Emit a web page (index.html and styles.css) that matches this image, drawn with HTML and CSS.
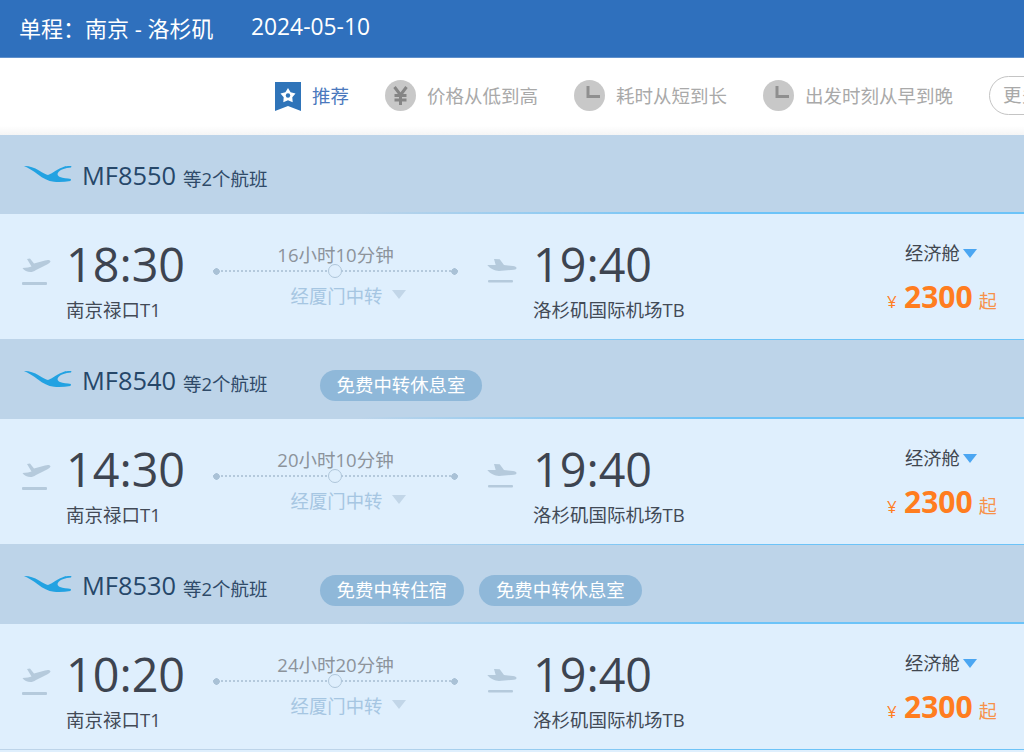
FILE: index.html
```html
<!DOCTYPE html>
<html lang="zh">
<head>
<meta charset="utf-8">
<title>航班列表</title>
<link rel="stylesheet" href="styles.css">
</head>
<body>
<svg class="defs" width="0" height="0" aria-hidden="true">
  <defs>
    <symbol id="logo" viewBox="0 0 48 18">
      <path d="M0 1C5 .8 10 2.500 15 5.500C19 7.800 22 9.800 24 10C29 8 34 3.500 40 1.700C42 1.200 45 1 47.500 1.200L47 2.500C41 3 37 4.500 35 6.500C33 8.500 33 10.500 36 12C39 13 43 13.500 47 14L46.500 16C41 17 35 17.300 30 16.800C24 16 19 13.500 14 9.500C9 5.500 4 3 0 1Z"/>
    </symbol>
    <symbol id="dep" viewBox="0 0 30 30">
      <path class="plane" d="M6 1L9 .5L13 5.500L24 2.500C27 1.500 29.500 2 29.500 3.500C29 5 27 6 24 7.500L15 12C13 13.500 11 14 9.500 14C6.500 14 3 12.500 1.500 10L7 9.500L10.500 8.500Z"/>
      <rect class="plane" x="1" y="24" width="25" height="3" rx="1"/>
    </symbol>
    <symbol id="arr" viewBox="0 0 30 30">
      <path class="plane" d="M7 1L12.700 1.300L17 7L26 8C28 8.300 29.500 9 29.500 10C29.500 11 28.500 11.500 27 11.700L12 13C8 12.800 3 10.500 .3 7L8.700 7Z"/>
      <rect class="plane" x="1" y="22" width="25" height="2.500" rx="1"/>
    </symbol>
    <symbol id="clock" viewBox="0 0 31 31">
      <circle cx="15.500" cy="15.500" r="15.500" fill="#c8c8c8"/>
      <path d="M14 6V16.500H26" fill="none" stroke="#8f8f8f" stroke-width="3"/>
    </symbol>
  </defs>
</svg>

<header class="topbar">
  <span class="route">单程：南京 - 洛杉矶</span>
  <span class="date">2024-05-10</span>
</header>

<nav class="sortbar">
  <div class="sort active">
    <svg class="badge" width="26" height="29" viewBox="0 0 26 29"><path d="M0 0H26V29L13 24L0 29Z" fill="#2f74b9"/><path d="M13 6L15.600 10.200L20.500 11.400L17.300 15.200L17.700 20.200L13 18.300L8.300 20.200L8.700 15.200L5.500 11.400L10.400 10.200Z" fill="#fff"/><circle cx="13" cy="13.500" r="2.200" fill="#2f74b9"/></svg>
    <span>推荐</span>
  </div>
  <div class="sort">
    <svg class="round" width="31" height="31" viewBox="0 0 31 31"><circle cx="15.500" cy="15.500" r="15.500" fill="#c8c8c8"/><path d="M9.500 7L15.500 15L21.500 7M15.500 15V25M9.500 15.500H21.500M9.500 20H21.500" fill="none" stroke="#858585" stroke-width="3"/></svg>
    <span>价格从低到高</span>
  </div>
  <div class="sort">
    <svg class="round" width="31" height="31"><use href="#clock"/></svg>
    <span>耗时从短到长</span>
  </div>
  <div class="sort">
    <svg class="round" width="31" height="31"><use href="#clock"/></svg>
    <span>出发时刻从早到晚</span>
  </div>
  <div class="more">更多筛选</div>
</nav>

<main class="list">
  <section class="group">
    <div class="ghead">
      <svg class="logo" width="48" height="18"><use href="#logo"/></svg>
      <span class="fno">MF8550</span>
      <span class="etc">等2个航班</span>
    </div>
    <div class="row">
      <svg class="icon" width="30" height="30"><use href="#dep"/></svg>
      <div class="point dep"><div class="time">18:30</div><div class="place">南京禄口T1</div></div>
      <div class="mid">
        <div class="dur">16小时10分钟</div>
        <div class="line"><i class="node"></i></div>
        <div class="via">经厦门中转<i class="tri pale"></i></div>
      </div>
      <svg class="icon" width="30" height="30"><use href="#arr"/></svg>
      <div class="point arr"><div class="time">19:40</div><div class="place">洛杉矶国际机场TB</div></div>
      <div class="fare">
        <div class="cabin">经济舱<i class="tri blue"></i></div>
        <div class="price"><span class="yen">¥</span><b>2300</b><span class="from">起</span></div>
      </div>
    </div>
  </section>

  <section class="group">
    <div class="ghead">
      <svg class="logo" width="48" height="18"><use href="#logo"/></svg>
      <span class="fno">MF8540</span>
      <span class="etc">等2个航班</span>
      <span class="tags"><span class="tag">免费中转休息室</span></span>
    </div>
    <div class="row">
      <svg class="icon" width="30" height="30"><use href="#dep"/></svg>
      <div class="point dep"><div class="time">14:30</div><div class="place">南京禄口T1</div></div>
      <div class="mid">
        <div class="dur">20小时10分钟</div>
        <div class="line"><i class="node"></i></div>
        <div class="via">经厦门中转<i class="tri pale"></i></div>
      </div>
      <svg class="icon" width="30" height="30"><use href="#arr"/></svg>
      <div class="point arr"><div class="time">19:40</div><div class="place">洛杉矶国际机场TB</div></div>
      <div class="fare">
        <div class="cabin">经济舱<i class="tri blue"></i></div>
        <div class="price"><span class="yen">¥</span><b>2300</b><span class="from">起</span></div>
      </div>
    </div>
  </section>

  <section class="group">
    <div class="ghead">
      <svg class="logo" width="48" height="18"><use href="#logo"/></svg>
      <span class="fno">MF8530</span>
      <span class="etc">等2个航班</span>
      <span class="tags"><span class="tag">免费中转住宿</span><span class="tag">免费中转休息室</span></span>
    </div>
    <div class="row">
      <svg class="icon" width="30" height="30"><use href="#dep"/></svg>
      <div class="point dep"><div class="time">10:20</div><div class="place">南京禄口T1</div></div>
      <div class="mid">
        <div class="dur">24小时20分钟</div>
        <div class="line"><i class="node"></i></div>
        <div class="via">经厦门中转<i class="tri pale"></i></div>
      </div>
      <svg class="icon" width="30" height="30"><use href="#arr"/></svg>
      <div class="point arr"><div class="time">19:40</div><div class="place">洛杉矶国际机场TB</div></div>
      <div class="fare">
        <div class="cabin">经济舱<i class="tri blue"></i></div>
        <div class="price"><span class="yen">¥</span><b>2300</b><span class="from">起</span></div>
      </div>
    </div>
  </section>
</main>
</body>
</html>
```

FILE: styles.css
```css
* { box-sizing: border-box; }
html, body { margin: 0; padding: 0; }
body {
  width: 1024px;
  height: 752px;
  overflow: hidden;
  background: #dfeffd;
  color: #3f4752;
  font-family: "Open Sans", "Noto Sans CJK SC", sans-serif;
}
.defs { display: block; height: 0; }
.topbar {
  height: 58px;
  padding: 0 0 4px 19px;
  display: flex;
  align-items: center;
  background: #2f70bd;
  border-bottom: 1px solid #5f90cc;
  color: #fff;
  font-size: 22px;
}
.route { width: 232px; }
.date { font-size: 22.800px; }
.sortbar {
  height: 77px;
  padding: 0 0 3px 275px;
  display: flex;
  align-items: center;
  background: linear-gradient(#fff 68px, #f5f5f5);
  overflow: hidden;
  white-space: nowrap;
}
.sort {
  display: flex;
  align-items: center;
  flex: none;
  gap: 11px;
  margin-right: 36px;
  color: #a9a9a9;
  font-size: 18.500px;
}
.sort.active { color: #4a78bd; }
.badge { margin-top: 3px; }
.more {
  flex: none;
  height: 39px;
  padding: 0 13px;
  line-height: 36px;
  border: 1.500px solid #c4c4c4;
  border-radius: 20px;
  color: #a9a9a9;
  font-size: 18.500px;
}
.group { display: block; }
.ghead {
  height: 77px;
  padding: 3px 0 0 24px;
  display: flex;
  align-items: center;
  background: #bdd4e9;
  color: #2f4a68;
}
.logo { fill: #22a2e2; flex: none; margin-top: -2px; }
.fno { margin-left: 10px; font-size: 25.400px; color: #264769; }
.etc { margin-left: 7px; margin-top: 5px; font-size: 18.500px; }
.tags { display: flex; gap: 15px; margin: 10px 0 0 52px; }
.tag {
  height: 31px;
  line-height: 29px;
  padding: 0 17px;
  border-radius: 16px;
  background: #8fb8d9;
  color: #fff;
  font-size: 18.400px;
}
.row {
  height: 128px;
  display: flex;
  align-items: flex-start;
  padding: 1px 0 0 21px;
  background: #dfeffd;
  border-top: 2px solid;
  border-image: linear-gradient(90deg, #bdd4e9 35%, #6cc3f8 70%) 1;
  border-bottom: 1px solid #d4e3ef;
}
.icon { flex: none; margin-top: 43px; }
.plane { fill: #b5cadc; }
.point { flex: none; }
.dep { width: 146px; margin-left: 15px; }
.arr { width: 354px; margin-left: 16px; }
.time {
  margin-top: 19px;
  height: 60px;
  line-height: 60px;
  font-size: 46.700px;
  color: #3d4450;
}
.place { margin-top: 5px; font-size: 18.500px; line-height: 22px; color: #424a56; }
.mid { flex: none; width: 245px; margin: 0 29px 0 1px; text-align: center; }
.dur {
  margin-top: 28px;
  height: 24px;
  line-height: 24px;
  font-size: 18.500px;
  color: #8c939b;
}
.line {
  position: relative;
  height: 14px;
  margin-top: -3px;
  background:
    radial-gradient(circle, #a9c1d6 3px, transparent 3.500px) left center / 7px 7px no-repeat,
    radial-gradient(circle, #a9c1d6 3px, transparent 3.500px) right center / 7px 7px no-repeat,
    repeating-linear-gradient(90deg, #b4c9dc 0 2px, transparent 2px 4px) center / 100% 2px no-repeat;
}
.node {
  position: absolute;
  left: 115px;
  top: 0;
  width: 14px;
  height: 14px;
  border-radius: 50%;
  border: 1px solid #afc6da;
  background: #dfeffd;
}
.via {
  margin-top: 5px;
  font-size: 18.400px;
  line-height: 26px;
  color: #a6c6e2;
  display: flex;
  justify-content: center;
  align-items: center;
  gap: 10px;
  padding-left: 26px;
}
.tri {
  display: inline-block;
  width: 0;
  height: 0;
  border-left: 7.500px solid transparent;
  border-right: 7.500px solid transparent;
  border-top: 9px solid #c2d6e8;
}
.tri.pale { margin-top: -4px; }
.tri.blue { border-top-color: #4ba6f2; margin-left: 3px; margin-top: 2px; }
.fare { flex: none; width: 110px; }
.cabin {
  margin-top: 24px;
  height: 26px;
  padding-left: 18px;
  display: flex;
  align-items: center;
  font-size: 18.300px;
  color: #40464f;
}
.price {
  margin-top: 11px;
  display: flex;
  align-items: baseline;
  color: #ff7d1f;
  white-space: nowrap;
}
.yen { font-size: 17px; width: 17px; }
.price b { font-size: 30px; font-weight: 700; }
.from { margin-left: 6px; font-size: 18px; color: #f7924a; }
```
